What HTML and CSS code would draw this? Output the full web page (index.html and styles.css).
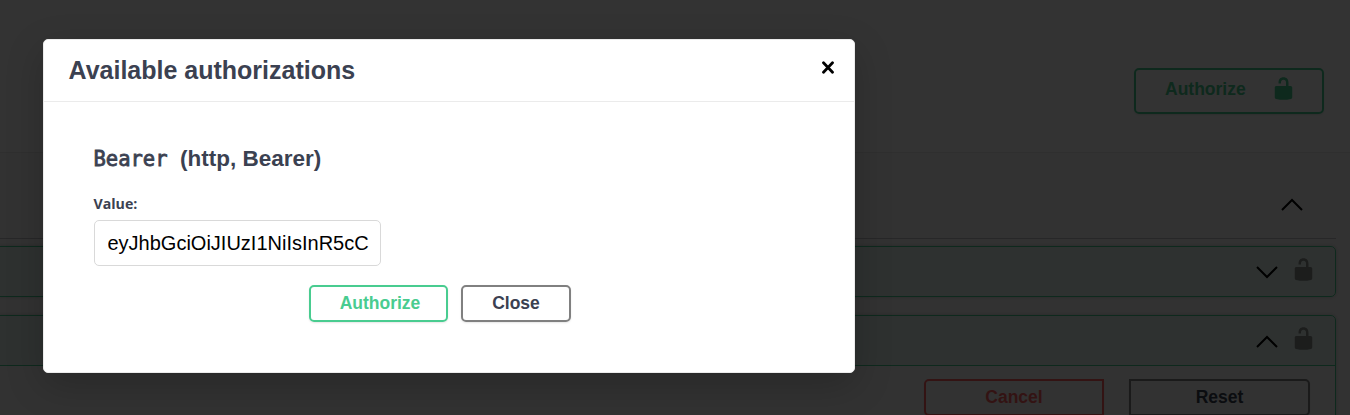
FILE: index.html
```html
<!DOCTYPE html>
<html lang="en">
<head>
<meta charset="utf-8">
<title>Available authorizations</title>
<link rel="stylesheet" href="styles.css">
</head>
<body>
<svg class="defs" width="0" height="0">
  <symbol id="unlocked" viewBox="0 0 20 20"><path d="M15.8 8H14V5.6C14 2.703 12.665 1 10 1 7.334 1 6 2.703 6 5.6V6h2v-.801C8 3.754 8.797 3 10 3c1.203 0 2 .754 2 2.199V8H4c-.553 0-1 .646-1 1.199V17c0 .549.428 1.139.951 1.307l1.197.387C5.672 18.861 6.55 19 7.1 19h5.8c.549 0 1.428-.139 1.951-.307l1.196-.387c.524-.167.953-.757.953-1.306V9.199C17 8.646 16.352 8 15.8 8z"/></symbol>
  <symbol id="chevron" viewBox="0 0 22 13"><path d="M1 12L11 2l10 10" fill="none" stroke="#000" stroke-width="2"/></symbol>
</svg>
<main class="page">
  <header class="scheme">
    <button class="btn btn-main">Authorize <svg class="lock"><use href="#unlocked"/></svg></button>
  </header>
  <div class="tag"><svg class="chevron"><use href="#chevron"/></svg></div>
  <section class="operation closed">
    <div class="summary">
      <svg class="chevron down"><use href="#chevron"/></svg>
      <svg class="lock muted"><use href="#unlocked"/></svg>
    </div>
  </section>
  <section class="operation opened">
    <div class="summary">
      <svg class="chevron"><use href="#chevron"/></svg>
      <svg class="lock muted"><use href="#unlocked"/></svg>
    </div>
    <div class="actions">
      <button class="btn cancel">Cancel</button>
      <button class="btn reset">Reset</button>
    </div>
  </section>
</main>
<div class="backdrop"></div>
<div class="modal">
  <div class="modal-head">
    <h3>Available authorizations</h3>
    <svg class="close" viewBox="0 0 12 13"><path d="M1.5 1.8L10.5 11.2M10.5 1.8L1.5 11.2"/></svg>
  </div>
  <div class="modal-body">
    <h4><code>Bearer</code><span>(http, Bearer)</span></h4>
    <label for="token">Value:</label>
    <input id="token" value="eyJhbGciOiJIUzI1NiIsInR5cC">
    <div class="modal-actions">
      <button class="btn authorize">Authorize</button>
      <button class="btn">Close</button>
    </div>
  </div>
</div>
</body>
</html>
```
FILE: styles.css
```css
* { box-sizing: border-box; }
body {
  margin: 0;
  height: 415px;
  overflow: hidden;
  position: relative;
  background: #fafafa;
  color: #3b4151;
  font-family: "Liberation Sans", Arial, sans-serif;
}
svg { display: block; }
.defs { position: absolute; }
.page { height: 415px; overflow: hidden; }
.scheme {
  height: 153px;
  padding: 68px 26px 0 0;
  display: flex;
  justify-content: flex-end;
  background: #fff;
  border-bottom: 1px solid #e8e8e8;
}
.btn {
  display: flex;
  align-items: center;
  justify-content: center;
  height: 37px;
  padding: 0 0 2px;
  border: 2px solid #808080;
  border-radius: 5px;
  background: transparent;
  box-shadow: 0 1px 2px rgba(0, 0, 0, .1);
  color: #3b4151;
  font: bold 17.5px/20px "Liberation Sans", Arial, sans-serif;
}
.btn-main {
  width: 190px;
  height: 46px;
  padding: 0 26px 4px 29px;
  justify-content: space-between;
  border-color: #49cc90;
  color: #49cc90;
}
.lock { width: 25px; height: 25px; fill: currentColor; }
.btn-main .lock { margin-bottom: 1px; }
.muted { color: #000; opacity: .4; }
.chevron { width: 22px; height: 13px; }
.down { transform: rotate(180deg); }
.tag {
  width: 1336px;
  height: 86px;
  padding: 45px 33.5px 0 0;
  display: flex;
  justify-content: flex-end;
  border-bottom: 1px solid rgba(59, 65, 81, .3);
}
.operation {
  width: 1341px;
  margin-left: -5px;
  border: 1px solid #49cc90;
  border-radius: 5px;
  box-shadow: 0 0 4px rgba(0, 0, 0, .19);
}
.closed { margin-top: 7px; height: 51px; }
.opened { margin-top: 18px; height: 150px; }
.summary {
  height: 49px;
  padding: 0 19px 5px 0;
  display: flex;
  align-items: center;
  justify-content: flex-end;
  gap: 13.5px;
  background: rgba(73, 204, 144, .1);
  border-radius: 4px;
}
.summary .chevron { margin-top: 5px; }
.closed .chevron { margin-top: 7px; }
.opened .summary {
  height: 50px;
  padding-bottom: 4px;
  border-bottom: 1px solid #49cc90;
  border-radius: 4px 4px 0 0;
}
.actions {
  display: flex;
  justify-content: flex-end;
  gap: 25px;
  padding: 13px 25px 0 0;
}
.cancel { width: 180px; border-color: #ff6060; color: #ff6060; border-radius: 5px 0 0 5px; }
.reset { width: 181px; border-radius: 0 5px 5px 0; }
.backdrop { position: absolute; inset: 0; background: rgba(0, 0, 0, .8); }
.modal {
  position: absolute;
  left: 43px;
  top: 39px;
  width: 812px;
  height: 334px;
  border: 1px solid #ebebeb;
  border-radius: 5px;
  background: #fff;
  box-shadow: 0 12px 38px rgba(0, 0, 0, .2);
}
.modal-head {
  height: 62px;
  padding: 0 20px 2px 24.5px;
  display: flex;
  align-items: center;
  justify-content: space-between;
  border-bottom: 1px solid #ebebeb;
}
h3 { margin: 0; font-size: 25px; line-height: 30px; }
.close { width: 12px; height: 13px; margin-bottom: 5px; }
.close path { fill: none; stroke: #000; stroke-width: 2.8; stroke-linecap: round; }
.modal-body { padding: 44px 50px 0 49.5px; }
h4 { display: flex; align-items: baseline; gap: 12.5px; margin: 0; font-size: 22.5px; line-height: 26px; }
code {
  font: 20.5px/26px "DejaVu Sans Mono", monospace;
  -webkit-text-stroke: .8px #3b4151;
}
label { display: block; margin-top: 22px; font: bold 14.2px/20px "Open Sans", sans-serif; }
input {
  display: block;
  width: 287px;
  height: 46px;
  margin-top: 6px;
  padding: 0 11px 0 13px;
  border: 1px solid #d9d9d9;
  border-radius: 5px;
  background: #fff;
  color: #000;
  font: 20px "Liberation Sans", Arial, sans-serif;
}
.modal-actions { display: flex; gap: 13px; margin: 19px 0 0 215.5px; }
.modal-actions .btn { width: 110px; }
.modal-actions .authorize { width: 139px; padding-left: 3px; border-color: #49cc90; color: #49cc90; }
```
